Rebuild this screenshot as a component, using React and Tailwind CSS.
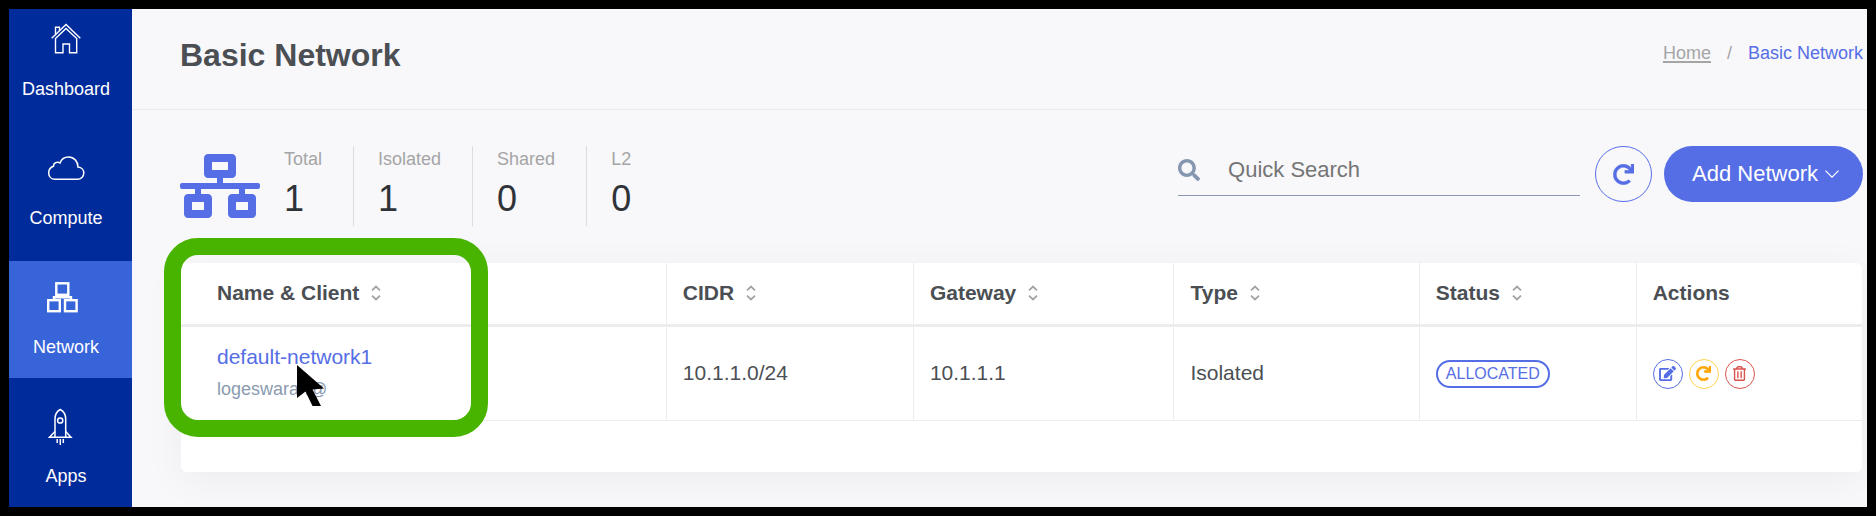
import React from "react";
import { FaNetworkWired, FaSearch, FaRedo, FaEdit, FaRegTrashAlt } from "react-icons/fa";

function HomeIcon() {
  return (
    <svg viewBox="0 0 40 40" className="size-10" fill="none" stroke="currentColor" strokeWidth="1.4" aria-hidden="true">
      <path d="M5.7 19.3 20 5.5l14.3 13.8" />
      <path d="M9.5 19.5 20 9.5l10.7 10V33.7h-7.2V25H17v8.7H9.5Z" />
      <path d="M9.5 15.5V8.2h4v3.5" />
    </svg>
  );
}

function CloudIcon() {
  return (
    <svg viewBox="0 0 40 40" className="size-10" fill="none" stroke="currentColor" strokeWidth="1.5" aria-hidden="true">
      <path d="M9 31.3C5 31.3 2.7 28.2 2.7 24.7c0-3.2 2.1-5.5 4.8-6.4C7.3 15 11.5 13 14 15c1.5-4 4.5-6 8.5-6C28 9 32 13.3 32 19c3.6.2 5.8 3 5.8 6 0 3.5-2.8 6.3-6.3 6.3Z" />
    </svg>
  );
}

function BoxesIcon() {
  return (
    <svg viewBox="0 0 40 40" className="size-10" fill="none" stroke="currentColor" strokeWidth="2.4" aria-hidden="true">
      <rect x="10.3" y="6.3" width="12" height="11.5" />
      <rect x="2.2" y="23.2" width="11.6" height="11" />
      <rect x="19" y="23.2" width="11.6" height="11" />
      <path d="M8 22.5v-2.3h17v2.3M16.3 18v2.5" strokeWidth="2.4" />
    </svg>
  );
}

function RocketIcon() {
  return (
    <svg viewBox="0 0 40 40" className="size-10" fill="none" stroke="currentColor" strokeWidth="1.5" aria-hidden="true">
      <path d="M9 31V13c0-4.5 2.5-8 5.2-9.5C17 5 19.7 8.5 19.7 13v18" />
      <circle cx="14.2" cy="14.5" r="2.6" />
      <path d="M9 25.5 3.5 31.3H25l-5.3-5.8" />
      <path d="M11.2 33v4M14.3 33v6M17.3 33v4" />
    </svg>
  );
}

function SortIcon() {
  return (
    <svg viewBox="0 0 10 16" className="h-4 w-[10px]" fill="none" stroke="#a3a3a3" strokeWidth="1.8" aria-hidden="true">
      <path d="M1 5.3 5 1.5l4 3.8M1 10.7l4 3.8 4-3.8" />
    </svg>
  );
}

const navItems = [
  { label: "Dashboard", Icon: HomeIcon },
  { label: "Compute", Icon: CloudIcon },
  { label: "Network", Icon: BoxesIcon, active: true },
  { label: "Apps", Icon: RocketIcon },
];

const stats = [
  { label: "Total", value: 1 },
  { label: "Isolated", value: 1 },
  { label: "Shared", value: 0 },
  { label: "L2", value: 0 },
];

const columns = [
  { label: "Name & Client", width: "w-[28.9%]", sortable: true },
  { label: "CIDR", width: "w-[14.7%]", sortable: true },
  { label: "Gateway", width: "w-[15.5%]", sortable: true },
  { label: "Type", width: "w-[14.6%]", sortable: true },
  { label: "Status", width: "w-[12.9%]", sortable: true },
  { label: "Actions", width: "", sortable: false },
];

const cell = "border-r border-[#ededed] px-4 first:pl-9 last:border-r-0";
const textCell = `${cell} border-b pb-0.5`;
const roundAction = "flex size-[30px] items-center justify-center rounded-full border";

function Sidebar() {
  return (
    <nav className="w-[123px] shrink-0 overflow-hidden bg-[#002b9b] text-white" aria-label="Main">
      <ul className="-mt-1.5 flex flex-col gap-3">
        {navItems.map(({ label, Icon, active }) => (
          <li key={label}>
            <a
              href="#"
              aria-current={active ? "page" : undefined}
              className={`flex flex-col items-center gap-[18px] pt-4 pr-[9px] pb-[19px] text-lg leading-6 ${active ? "bg-[#3864d9]" : ""}`}
            >
              <Icon />
              {label}
            </a>
          </li>
        ))}
      </ul>
    </nav>
  );
}

export default function App() {
  return (
    <div className="flex min-h-screen border-[9px] border-black bg-[#f8f8fb] font-['Liberation_Sans',Arial,sans-serif] text-[#4b4f54]">
      <Sidebar />
      <main className="min-w-0 flex-1 overflow-hidden">
        <header className="flex h-[101px] items-end justify-between border-b border-[#ebebee] pr-1 pb-[34px] pl-12">
          <h1 className="text-[32px] leading-10 font-bold">Basic Network</h1>
          <nav aria-label="Breadcrumb" className="pb-[10px]">
            <ol className="flex items-center gap-4 text-lg leading-6 text-[#a5a5a5]">
              <li>
                <a href="#" className="underline decoration-2 underline-offset-2">Home</a>
              </li>
              <li aria-hidden="true">/</li>
              <li className="text-[#556ee6]">Basic Network</li>
            </ol>
          </nav>
        </header>

        <div className="pt-9 pr-1 pl-12">
          <div className="flex items-start justify-between">
            <div className="flex h-20 items-center">
              <FaNetworkWired className="h-16 w-20 text-[#556ee6]" aria-hidden="true" />
              <dl className="flex">
                {stats.map((s) => (
                  <div key={s.label} className="border-r border-[#dcdce0] pr-[31px] pl-6 last:border-r-0">
                    <dt className="text-lg leading-[26px] text-[#a5a5a5]">{s.label}</dt>
                    <dd className="text-4xl leading-[54px] text-[#2f3338]">{s.value}</dd>
                  </div>
                ))}
              </dl>
            </div>

            <div className="flex items-start">
              <label className="mr-[15px] flex h-[50px] w-[402px] items-center gap-7 border-b border-[#8a98b5] pb-0.5">
                <FaSearch className="size-[22px] shrink-0 text-[#8496b0]" aria-hidden="true" />
                <input
                  type="search"
                  aria-label="Quick Search"
                  placeholder="Quick Search"
                  className="min-w-0 flex-1 bg-transparent text-[22px] leading-8 outline-none placeholder:text-[#757575]"
                />
              </label>
              <button
                type="button"
                aria-label="Refresh"
                className="mr-3 flex h-14 w-[57px] items-center justify-center rounded-full border border-[#556ee6] text-[#556ee6]"
              >
                <FaRedo className="size-[21px]" strokeWidth="12" />
              </button>
              <button
                type="button"
                className="flex h-14 items-center gap-[7px] rounded-full bg-[#556ee6] pr-6 pl-7 text-[22px] leading-8 text-white"
              >
                Add Network
                <svg viewBox="0 0 14 8" className="h-2 w-[14px]" fill="none" stroke="currentColor" strokeWidth="1.2" aria-hidden="true">
                  <path d="M.5.7 7 7.2 13.5.7" />
                </svg>
              </button>
            </div>
          </div>

          <section className="relative mx-px mt-[37px] rounded-md bg-white pb-[51px] shadow-[0_8px_40px_rgba(0,0,0,0.05)]">
            <table className="w-full table-fixed border-separate border-spacing-0 text-left text-[21px] leading-8">
              <thead>
                <tr className="h-16">
                  {columns.map((c) => (
                    <th key={c.label} scope="col" className={`${cell} ${c.width} border-b-[3px] pb-0.5 font-bold`}>
                      <span className="flex items-center gap-3">
                        {c.label}
                        {c.sortable && <SortIcon />}
                      </span>
                    </th>
                  ))}
                </tr>
              </thead>
              <tbody>
                <tr className="h-[94px]">
                  <td className={textCell}>
                    <a href="#" className="block text-[#556ee6]">default-network1</a>
                    <span className="block text-lg leading-8 text-[#8a9bb2]">logeswaran@</span>
                  </td>
                  <td className={textCell}>10.1.1.0/24</td>
                  <td className={textCell}>10.1.1.1</td>
                  <td className={textCell}>Isolated</td>
                  <td className={`${cell} border-b`}>
                    <span className="flex h-7 w-fit items-center rounded-full border-2 border-[#556ee6] px-2 text-base leading-6 text-[#556ee6]">
                      ALLOCATED
                    </span>
                  </td>
                  <td className={`${cell} border-b`}>
                    <div className="flex gap-1.5">
                      <button type="button" aria-label="Edit" className={`${roundAction} border-[#556ee6] text-[#556ee6]`}>
                        <FaEdit className="h-[15px] w-[17px]" />
                      </button>
                      <button type="button" aria-label="Restart" className={`${roundAction} border-[#ffd44f] text-[#ffa500]`}>
                        <FaRedo className="size-[15px]" strokeWidth="20" />
                      </button>
                      <button type="button" aria-label="Delete" className={`${roundAction} border-[#d9534f] text-[#d9534f]`}>
                        <FaRegTrashAlt className="size-[15px]" />
                      </button>
                    </div>
                  </td>
                </tr>
              </tbody>
            </table>

            <div className="pointer-events-none absolute -top-[25px] -left-[17px] h-[199px] w-[324px] rounded-[34px] border-[17px] border-[#49b400]" />
            <svg viewBox="0 0 28 41" className="pointer-events-none absolute top-[102px] left-[116px] h-[41px] w-7" aria-hidden="true">
              <path d="M0 0 27 23.5 15.5 24.5 24 41H15.5L8.5 26.5 0 33Z" fill="#000" />
            </svg>
          </section>
        </div>
      </main>
    </div>
  );
}
